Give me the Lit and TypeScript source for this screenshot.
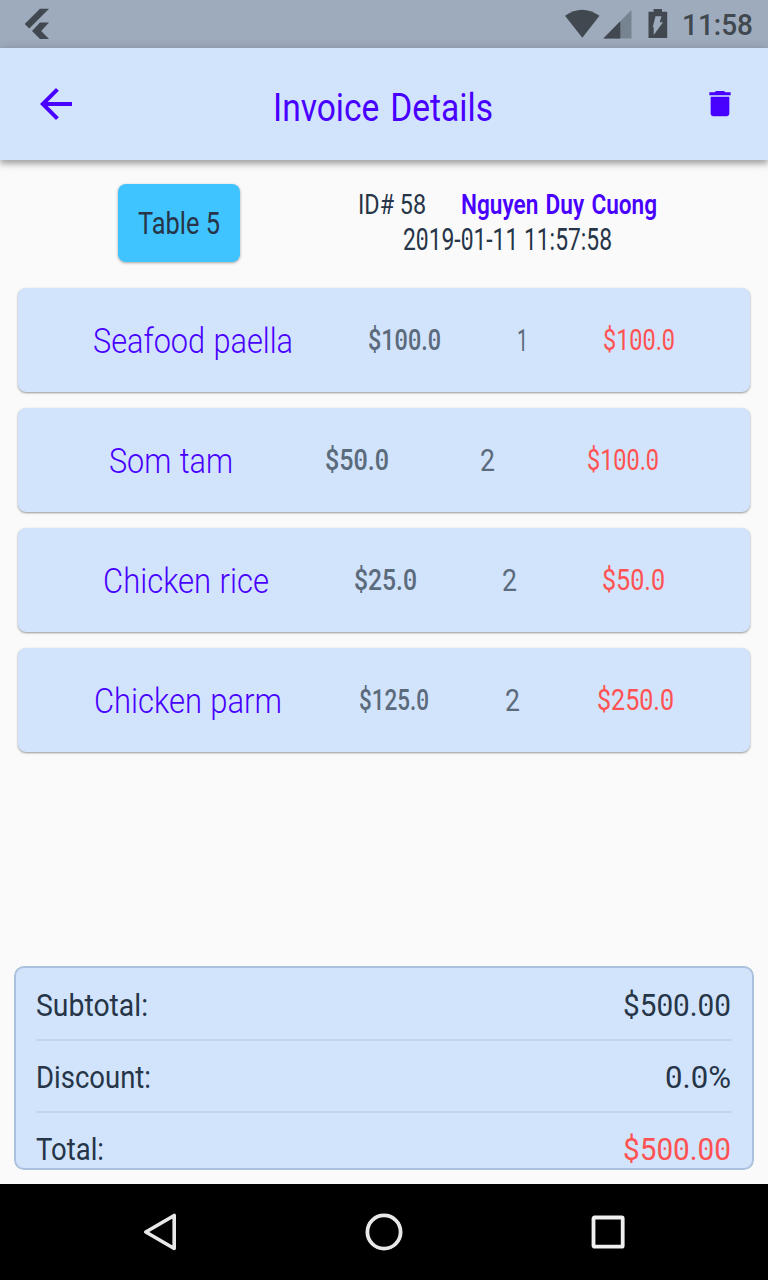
import { LitElement, html, svg, css } from "lit";
import { customElement, property } from "lit/decorators.js";

/**
 * Condensed label: the whole string is fitted to `w` pixels.
 * Zeros get a small centre dot when `dotted` is set.
 */
@customElement("fit-text")
class FitText extends LitElement {
  @property() text = "";
  @property({ type: Number }) w = 0;
  @property({ type: Number }) h = 40;
  @property({ type: Number }) base = 30;
  @property({ type: Number }) dx = 0;
  @property({ type: Boolean }) dotted = false;
  @property({ attribute: false }) dots: { x: number; y: number }[] = [];
  static styles = css`
    :host { display: block; flex: none; }
    svg { display: block; overflow: visible; }
    text { fill: currentColor; stroke: currentColor; stroke-width: var(--soft, 0); stroke-linejoin: round; word-spacing: var(--gap, 0); }
    circle { fill: currentColor; }
  `;
  firstUpdated() {
    if (!this.dotted) return;
    const el = this.renderRoot.querySelector("text") as SVGTextElement;
    const size = parseFloat(getComputedStyle(el).fontSize);
    this.dots = [...this.text].flatMap((ch, i) => {
      if (ch !== "0") return [];
      const a = el.getStartPositionOfChar(i).x;
      const b = el.getEndPositionOfChar(i).x;
      return [{ x: (a + b) / 2, y: this.base - size * 0.355 }];
    });
  }
  render() {
    return html`<svg width=${this.w} height=${this.h}>
      <text x=${this.dx} y=${this.base} textLength=${this.w} lengthAdjust="spacingAndGlyphs">${this.text}</text>
      ${this.dots.map((d) => svg`<circle cx=${d.x} cy=${d.y} r="1.3"/>`)}
    </svg>`;
  }
}

interface Line { name: string; nw: number; price: string; pw: number; qty: string; qw: number; total: string; tw: number; }

const LINES: Line[] = [
  { name: "Seafood paella", nw: 200, price: "$100.0", pw: 73, qty: "1", qw: 11, total: "$100.0", tw: 72 },
  { name: "Som tam", nw: 124, price: "$50.0", pw: 64, qty: "2", qw: 15, total: "$100.0", tw: 72 },
  { name: "Chicken rice", nw: 166, price: "$25.0", pw: 63, qty: "2", qw: 15, total: "$50.0", tw: 63 },
  { name: "Chicken parm", nw: 188, price: "$125.0", pw: 70, qty: "2", qw: 15, total: "$250.0", tw: 77 },
];

@customElement("app-root")
class AppRoot extends LitElement {
  static styles = css`
    :host { display: flex; flex-direction: column; width: 768px; height: 1280px; background: #fafafa; color: #263547; font-family: Roboto, "Liberation Sans", sans-serif; overflow: hidden; }
    * { box-sizing: border-box; }
    svg { display: block; flex: none; }
    .status { height: 48px; flex: none; background: #9eabbc; color: #414850; display: flex; align-items: center; padding: 0 15px 0 24px; }
    .spacer { flex: 1; }
    .clock { font-size: 29px; font-weight: 500; margin-left: 14px; }
    .bar { height: 112px; flex: none; background: #d2e4fc; color: #4800ff; display: flex; align-items: center; justify-content: space-between; padding: 0 32px; box-shadow: 0 4px 5px rgba(0,0,0,.2), 0 2px 10px rgba(0,0,0,.24); z-index: 1; }
    .title { font-size: 39px; --gap: 3px; margin-right: 18px; }
    .head { display: flex; height: 128px; flex: none; padding: 24px 0 0 118px; }
    .table { width: 122px; height: 78px; border-radius: 8px; background: #40c4ff; box-shadow: 0 1px 3px rgba(0,0,0,.35); padding-left: 20px; font-size: 31.5px; }
    .meta { margin-left: 118px; }
    .who { display: flex; gap: 35px; font-size: 27px; }
    .user { color: #4800ff; font-weight: 600; --gap: 2px; }
    .date { margin-left: 45px; font-size: 30.5px; }
    .list { display: flex; flex-direction: column; gap: 16px; padding: 0 18px; }
    .card { height: 104px; border-radius: 8px; background: #d2e4fc; box-shadow: 0 1px 2px rgba(0,0,0,.3), 0 1px 3px rgba(0,0,0,.12); display: flex; justify-content: space-evenly; align-items: flex-start; }
    .name { color: #4800ff; font-size: 35px; font-weight: 300; --gap: 1px; }
    .price { color: #5b6b7c; font-size: 29px; font-weight: 500; }
    .qty { color: #5b6b7c; font-size: 31px; }
    .total { color: #ff5252; font-size: 29px; }
    .sum { height: 204px; flex: none; margin: 0 14px 14px; border: 2px solid #acc1de; border-radius: 10px; background: #d2e4fc; padding: 1px 20px 0; overflow: hidden; }
    .row { height: 72px; display: flex; justify-content: space-between; border-bottom: 2px solid #c3d4ec; font-size: 32px; }
    .red { color: #ff5252; }
    .nav { height: 96px; flex: none; background: #000; display: flex; justify-content: space-between; align-items: center; padding: 0 136px; }
  `;
  render() {
    return html`
      <div class="status">
        <svg width="26" height="32" viewBox="0 0 26 32"><path fill="#414850" d="M16 .8H25L5.3 20.5.7 16zM16 14.6H25L17.2 23 25 31H16L8 23z"/></svg>
        <div class="spacer"></div>
        <svg width="103" height="32" viewBox="0 0 103 32" fill="#414850">
          <path d="M0 7.8Q17-4.2 34.5 7.8L17.3 29.8z"/>
          <path fill="#768390" d="M38.3 30.5L66.5 2V30.5z"/><path d="M38.3 30.5L55.3 13.3V30.5z"/>
          <path fill-rule="evenodd" d="M83.5 3.8H88.6V1H97V3.8H102.2V30H83.5zM90.5 8.2H96.5L94.7 14.2H98L88.7 27V19H87.8z"/>
        </svg>
        <fit-text class="clock" text="11:58" w="71" h="32" base="27"></fit-text>
      </div>
      <div class="bar">
        <svg width="48" height="48" viewBox="0 0 24 24" fill="#4800ff"><path d="M20 11H7.83l5.59-5.59L12 4l-8 8 8 8 1.41-1.41L7.83 13H20v-2z"/></svg>
        <fit-text class="title" text="Invoice Details" w="220" h="48" base="40.5"></fit-text>
        <svg width="32" height="32" viewBox="0 0 24 24" fill="#4800ff"><path d="M5 19.2c0 1.1.9 2 2 2h10c1.1 0 2-.9 2-2V6.6H5zM20 3.2h-4l-1-1H9L8 3.2H4v2.3h16z"/></svg>
      </div>
      <div class="head">
        <div class="table"><fit-text text="Table 5" w="82" h="78" base="49.5"></fit-text></div>
        <div class="meta">
          <div class="who">
            <fit-text text="ID# 58" w="68" h="35" base="29.5"></fit-text>
            <fit-text class="user" text="Nguyen Duy Cuong" w="196" h="35" base="29.5"></fit-text>
          </div>
          <fit-text class="date" text="2019-01-11 11:57:58" w="209" h="35" base="30.5" dotted></fit-text>
        </div>
      </div>
      <div class="list">
        ${LINES.map((l) => html`<div class="card">
          <fit-text class="name" .text=${l.name} .w=${l.nw} h="104" base="65"></fit-text>
          <fit-text class="price" .text=${l.price} .w=${l.pw} h="104" base="62" dotted></fit-text>
          <fit-text class="qty" .text=${l.qty} .w=${l.qw} h="104" base="62.5"></fit-text>
          <fit-text class="total" .text=${l.total} .w=${l.tw} h="104" base="62" dotted></fit-text>
        </div>`)}
      </div>
      <div class="spacer"></div>
      <div class="sum">
        <div class="row"><fit-text text="Subtotal:" w="112" h="70" base="47"></fit-text><fit-text dx="-1" text="$500.00" w="108" h="70" base="47" dotted></fit-text></div>
        <div class="row"><fit-text text="Discount:" w="115" h="70" base="47"></fit-text><fit-text dx="-1" text="0.0%" w="66" h="70" base="47" dotted></fit-text></div>
        <div class="row"><fit-text text="Total:" w="68" h="70" base="47"></fit-text><fit-text dx="-1" class="red" text="$500.00" w="108" h="70" base="47" dotted></fit-text></div>
      </div>
      <div class="nav">
        <svg width="48" height="48" fill="none" stroke="#e8e8e8" stroke-width="3.6" stroke-linejoin="round"><path d="M9.8 24L38.2 7.5V40.5z"/></svg>
        <svg width="48" height="48" fill="none" stroke="#e8e8e8" stroke-width="3.8"><circle cx="24" cy="24" r="16.6"/></svg>
        <svg width="48" height="48" fill="none" stroke="#f0f0f0" stroke-width="3.8"><rect x="9.5" y="9.5" width="29.2" height="29.2" rx="1"/></svg>
      </div>`;
  }
}
